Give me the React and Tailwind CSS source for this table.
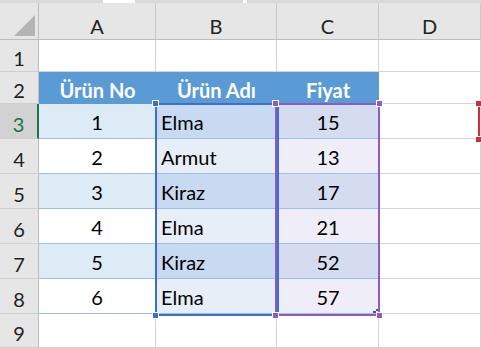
import React from "react";

const ROWS = [
  { no: 1, name: "Elma", price: 15 },
  { no: 2, name: "Armut", price: 13 },
  { no: 3, name: "Kiraz", price: 17 },
  { no: 4, name: "Elma", price: 21 },
  { no: 5, name: "Kiraz", price: 52 },
  { no: 6, name: "Elma", price: 57 }
];

const FONT = { fontFamily: "Lato, 'Open Sans', sans-serif" };

function Handle({ className, color }) {
  return (
    <div
      className={`absolute w-[7px] h-[7px] border border-white ${color} ${className}`}
    />
  );
}

function RowLabel({ n, active }) {
  return (
    <div
      className={`flex items-center justify-center pt-[5px] text-[20px] border-b border-[#d0d0d0] ${
        active
          ? "bg-[#d2d2d2] text-[#217346] border-r-2 border-r-[#217346]"
          : "bg-[#e6e6e6] text-[#222] border-r border-r-[#bdbdbd]"
      }`}
    >
      {n}
    </div>
  );
}

export default function App() {
  return (
    <div
      className="relative w-[481px] h-[348px] overflow-hidden bg-white select-none"
      style={FONT}
    >
      {/* faint strip above the headers */}
      <div className="flex h-[3px] bg-white">
        <div className="w-[103px] bg-[#dadada]" />
        <div className="w-[32px]" />
        <div className="w-[108px] bg-[#dadada]" />
        <div className="w-[4px]" />
        <div className="flex-1 bg-[#dadada]" />
      </div>

      <div className="grid grid-cols-[39px_117px_121px_102px_102px] grid-rows-[37px_32px_32px_repeat(6,35px)_34px]">
        {/* column headers */}
        <div className="relative bg-[#e6e6e6] border-r border-b border-[#bdbdbd]">
          <div className="absolute right-[3px] bottom-[3px] w-0 h-0 border-l-[21px] border-l-transparent border-b-[21px] border-b-[#b4b4b4]" />
        </div>
        {["A", "B", "C", "D"].map((c) => (
          <div
            key={c}
            className="flex items-center justify-center pt-[9px] text-[20px] text-[#222] bg-[#e6e6e6] border-r border-r-[#c8c8c8] border-b border-b-[#bdbdbd]"
          >
            {c}
          </div>
        ))}

        {/* row 1 */}
        <RowLabel n={1} />
        <div className="border-r border-b border-[#d4d4d4]" />
        <div className="border-r border-b border-[#d4d4d4]" />
        <div className="border-r border-b border-[#d4d4d4]" />
        <div className="border-r border-b border-[#d4d4d4]" />

        {/* row 2 - table header */}
        <RowLabel n={2} />
        {["Ürün No", "Ürün Adı", "Fiyat"].map((h) => (
          <div
            key={h}
            className="flex items-center justify-center pt-[3px] bg-[#5b9bd5] text-white font-bold text-[20px]"
          >
            {h}
          </div>
        ))}
        <div className="border-r border-b border-[#d4d4d4]" />

        {ROWS.map((r, i) => {
          const odd = i % 2 === 0;
          return (
            <React.Fragment key={r.no}>
              <RowLabel n={i + 3} active={i === 0} />
              <div
                className={`flex items-center justify-center pt-[2px] text-[20px] text-black border-r border-b border-[#9bc2e6] ${
                  odd ? "bg-[#ddebf7]" : "bg-white"
                }`}
              >
                {r.no}
              </div>
              <div
                className={`flex items-center pl-[5px] pt-[2px] text-[20px] text-black border-b border-[#9bc2e6] ${
                  odd ? "bg-[#c8daf1]" : "bg-[#e8eef8]"
                }`}
              >
                {r.name}
              </div>
              <div
                className={`flex items-center justify-center pt-[2px] text-[20px] text-black border-b border-[#9bc2e6] ${
                  odd ? "bg-[#d6dcef]" : "bg-[#efedf7]"
                }`}
              >
                {r.price}
              </div>
              <div className="border-r border-b border-[#d4d4d4]" />
            </React.Fragment>
          );
        })}

        {/* row 9 */}
        <RowLabel n={9} />
        <div className="border-r border-b border-[#d4d4d4]" />
        <div className="border-r border-b border-[#d4d4d4]" />
        <div className="border-r border-b border-[#d4d4d4]" />
        <div className="border-r border-b border-[#d4d4d4]" />
      </div>

      {/* reference range B3:B8 */}
      <div className="absolute left-[155px] top-[103px] w-[124px] h-[213px] border-2 border-[#3d6fcc]">
        <Handle color="bg-[#3d6fcc]" className="-left-[5px] -top-[5px]" />
        <Handle color="bg-[#3d6fcc]" className="-left-[5px] -bottom-[5px]" />
      </div>

      {/* reference range C3:C8 */}
      <div className="absolute left-[275px] top-[103px] w-[105px] h-[213px] border-2 border-[#8a5cc4]">
        <Handle color="bg-[#8a5cc4]" className="-left-[5px] -top-[5px]" />
        <Handle color="bg-[#8a5cc4]" className="-right-[5px] -top-[5px]" />
        <Handle color="bg-[#8a5cc4]" className="-left-[5px] -bottom-[5px]" />
        <Handle color="bg-[#8a5cc4]" className="-right-[5px] -bottom-[5px]" />
        <div className="absolute right-[2px] bottom-[1px] w-[3px] h-[2px] bg-[#5a4a9a]" />
        <div className="absolute right-[0px] bottom-[3px] w-[2px] h-[2px] bg-[#5a4a9a]" />
      </div>

      {/* reference range starting in E3, mostly off screen */}
      <div className="absolute left-[478px] top-[103px] w-[20px] h-[37px] border-2 border-[#c8303c]">
        <Handle color="bg-[#c8303c]" className="-left-[5px] -top-[5px]" />
        <Handle color="bg-[#c8303c]" className="-left-[5px] -bottom-[5px]" />
      </div>
    </div>
  );
}
